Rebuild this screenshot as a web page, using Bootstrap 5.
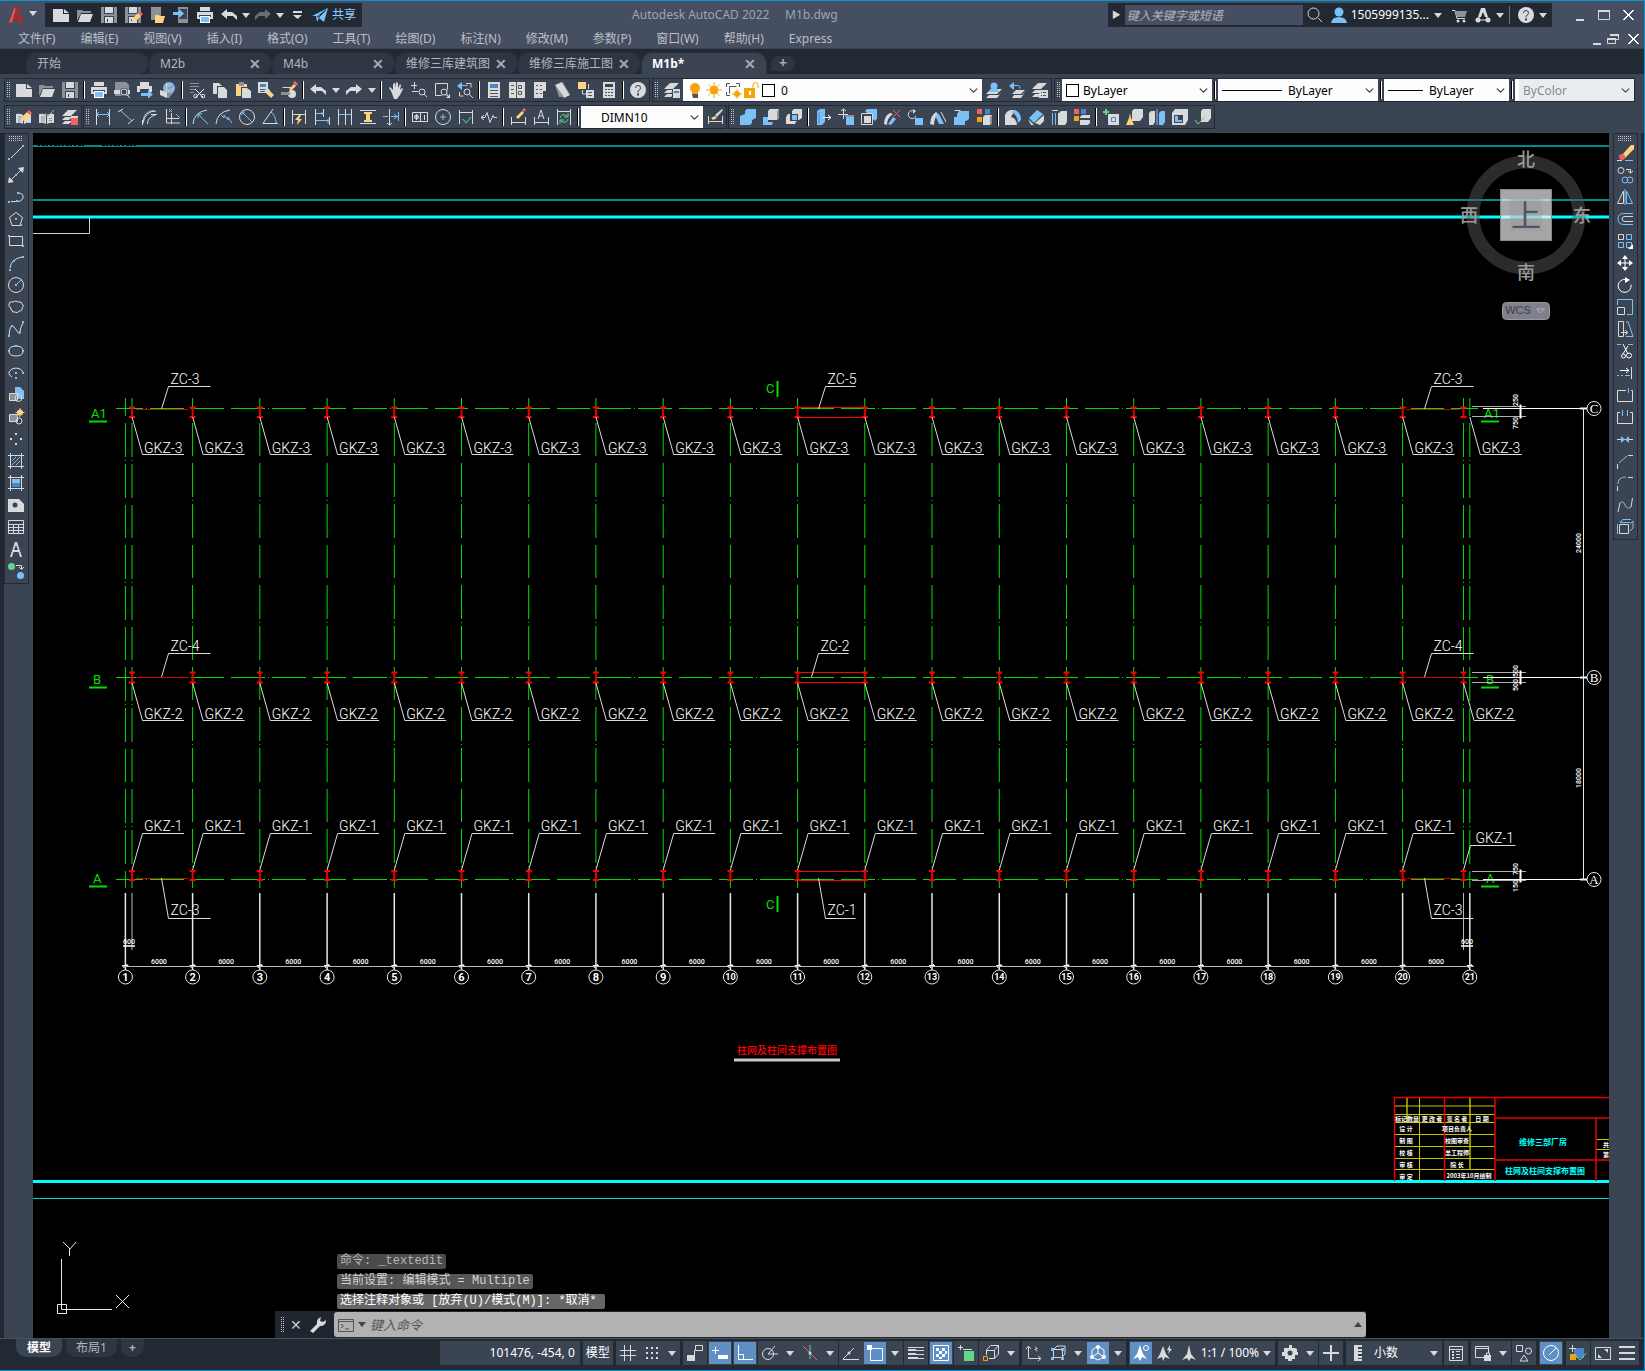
<!DOCTYPE html>
<html lang="zh-CN">
<head>
<meta charset="utf-8">
<meta name="viewport" content="width=device-width, initial-scale=1">
<title>Autodesk AutoCAD 2022 - M1b.dwg</title>
<link href="https://cdn.jsdelivr.net/npm/bootstrap@5.3.0/dist/css/bootstrap.min.css" rel="stylesheet">
<style>
:root{--bar:#464f61;--panel:#3b4453;--dark:#222933;--tab:#2e3643;--ink:#d9dadc;--on:#608fc3;--edge:#0a93d4}
body{font:12px/16px "Noto Sans","Noto Sans CJK SC",sans-serif;background:var(--dark);color:var(--ink)}
.app{height:100vh;border:solid var(--edge);border-width:1px 1px 1px 0;overflow:hidden}
button.tool{background:none;border:0;padding:0;color:inherit;display:flex;align-items:center;justify-content:center;flex:none}
svg.ico{width:16px;height:16px;overflow:visible;flex:none;display:block}
.caret-dn{width:0;height:0;border:4px solid transparent;border-top:5px solid var(--ink);border-bottom:0}
.titlebar{background:var(--bar);height:26px;padding-top:2px}
.qat{background:var(--dark);height:24px}
.qat .tool{width:24px;height:24px}.qat .drop{width:10px}
.share-btn{color:#8fcdfd!important;padding:0 6px 0 3px!important}
.caption-text{color:#a0a5ae}
.searchbox{width:178px;height:20px;background:var(--bar);border:0;color:#c5c8ce;font-size:12px;font-style:italic;padding:0 2px;outline:0}
.searchbox::placeholder{color:#b4b8c0;opacity:1}
.menubar{background:var(--bar);height:22px;padding:2px 0 0 6px;gap:1px;border-bottom:1px solid var(--panel)}
.menubar a{color:#bcbfc5;text-decoration:none;padding:0 12px}
.tabstrip{background:var(--dark);height:25px;padding:3px 0 0 26px}
.doc-tab{width:123px;height:22px;background:var(--tab);border-radius:11px 11px 11px 4px;padding:0 10px;color:#b4b7bc;border:1px solid #2a313d;border-bottom:0}
.doc-tab.current{background:var(--panel);color:#fff;font-weight:700;border-radius:11px 11px 0 0;width:126px}
.doc-tab .tool,.plus-tab{color:#a7abb1;font-size:14px;font-weight:700}
.plus-tab{width:24px;height:15px;background:var(--tab);border:0;border-radius:8px 8px 8px 3px;line-height:12px;padding:0}
.toolrows{background:var(--panel);height:59px;padding:4px 0 0 4px;gap:3px}
.frame{border:1px solid var(--dark);height:24px;display:flex;align-items:center}
.frame .tool{width:23px;height:22px}.frame .drop{width:13px}
.grip{width:7px;height:16px;flex:none;padding:0 1px;background:conic-gradient(#c3c7cd 25%,transparent 0) 0 0/2px 2px content-box}
.grip-h{width:14px;height:5px;margin:1px auto 1px 3px;background:conic-gradient(#c3c7cd 25%,transparent 0) 0 0/2px 2px}
.vsep{width:6px;height:18px;flex:none;display:flex;justify-content:center}
.vsep::before{content:"";width:2px;background:linear-gradient(90deg,#000 50%,#fff 50%)}
.combo{background:#fdfdfd;height:22px;display:flex;align-items:center;flex:none;color:#000}
.combo select{border:0;color:#000;font-size:12px;line-height:16px;padding:1px 20px 0 4px;height:22px;min-height:0;border-radius:0;background-color:transparent;background-size:9px 9px;background-position:right 4px center;width:auto;flex:1;min-width:0}
.w-layer{width:299px;gap:2px}.w-layer span.d-flex{gap:3px}.w-color{width:150px}.w-type{width:160px}.w-weight{width:125px}.w-plot{width:119px}.w-dim{width:122px}
.w-type select,.w-weight select{padding-left:6px}
.combo select:disabled{color:#7c7c7c;opacity:.9}
.swatch{width:13px;height:13px;border:1px solid #000;flex:none}
.side{background:var(--panel);width:29px;flex:none}
.side.right{width:32px;padding-left:4px}
.side .rack{width:25px;border:1px solid var(--dark);padding-top:1px;padding-bottom:1px}
.side .tool{width:22px;height:22px}
.board{background:#000;position:relative;flex:1;min-width:0;overflow:hidden}
.board svg.sheet{position:absolute;inset:0;width:100%;height:100%}
.cmd{position:absolute;bottom:0;left:242px;right:243px}
.hist{font:12px/15px "Liberation Mono","Noto Sans CJK SC",monospace;margin-left:62px;gap:5px}
.hist div{background:#4b4b4b;border-radius:2px;padding:0 3px;height:15px;color:#b6b6b6}
.hist div:nth-child(2){background:#565656;color:#d2d2d2}.hist div:nth-child(3){background:#666;color:#fff;padding-right:8px}
.cmdline{height:27px;background:#20262f;margin-top:2px}
.cmdline .close-x{color:#c8c8c8;font-size:14px}
.cmdline .entry{background:#b2b2b2;height:25px;border-radius:3px}
.cmdline .caret-dn{border-top-color:#444}.flip{transform:rotate(180deg)}
.cmdline input{background:none;border:0;outline:0;font-style:italic;font-size:13px;flex:1;padding:0}
.cmdline input::placeholder{color:#555;opacity:1}
.statusbar{background:var(--dark);height:32px;border-top:1px solid #4a505a;padding:0 5px 0 16px}
.layout-tab{height:18px;border:0;background:var(--tab);color:#b4b7bc;padding:0 10px;border-radius:0 0 10px 10px;line-height:18px;font-size:12px}
.layout-tab.current{background:var(--panel);color:#fff;font-weight:700;padding:0 11px}
.sgroup{background:var(--panel);height:24px;display:flex;align-items:center;margin-top:2px;color:#fff}
.sgroup .tool{width:24px;height:24px}.sgroup .drop{width:16px}
.sgroup .tool.active span{background:var(--on);width:22px;height:22px;display:flex;align-items:center;justify-content:center}
.coords{width:140px;justify-content:flex-end;padding-right:5px}
.label-cell{padding:0 3px;width:30px;margin-left:3px;justify-content:center}
.cad{font-family:Roboto,sans-serif;font-weight:300;font-size:14px;fill:#fff}
.cad-green{font-size:13px;font-weight:400;fill:#00e000}
.tiny{font:700 8px Roboto,sans-serif;fill:#fff}
.dimtxt{font:500 7px Roboto,sans-serif;fill:#fff}
.axis{font:13px "Liberation Serif",serif;fill:#fff}
.cjk{font-family:"Noto Sans CJK SC",sans-serif}
</style>
<script src="https://cdn.jsdelivr.net/npm/bootstrap@5.3.0/dist/js/bootstrap.bundle.min.js"></script>
</head>
<body>
<div class="app d-flex flex-column">
  <header>
    <div class="titlebar d-flex align-items-start">
      <button class="tool px-2 mt-1" aria-label="应用程序"><svg class="ico" viewBox="0 0 16 16"><path fill="#b3262b" d="M1 16L6.500 0h4L15 16h-4l-1-4H6l-1.500 4zM7 9h3L8.500 4z"/><path fill="#e8575a" d="M1 16L6.500 0l1 3L4 15z"/></svg></button>
      <span class="caret-dn mt-2 me-1 pt-1" style="margin-left:-3px"></span>
      <div class="qat d-flex align-items-center ps-1 ms-1" data-tools="new open save saveas mobopen mobsave print undo v redodim v bars"><button class="tool order-last w-auto gap-1 share-btn"><svg class="ico" viewBox="0 0 16 16"><path fill="#78c3fb" d="M0 9L16 1l-4 14-5-4-2 4-1-6z"/><path stroke="#222933" d="M5 10L14 3M6 11l7-7"/></svg>共享</button></div>
      <div class="flex-fill text-center caption-text align-self-center">Autodesk AutoCAD 2022 &nbsp;&nbsp;&nbsp; M1b.dwg</div>
      <div class="qat d-flex align-items-center">
        <span class="px-1" style="font-size:9px">▶</span>
        <input class="searchbox" type="text" placeholder="键入关键字或短语" aria-label="搜索">
        <span class="d-flex" data-tools="find user"></span><span class="text-white">1505999135...</span>
        <span class="d-flex ps-1" data-tools="v"></span><span class="d-flex ps-1" data-tools="cart aicon v"></span><span class="border-start border-secondary h-75 mx-1"></span><span class="d-flex pe-1" data-tools="helpc v"></span>
      </div>
      <div class="d-flex align-items-center ps-3 pe-1 qat bg-transparent" data-tools="wmin wmax wclose"></div>
    </div>
    <nav class="menubar d-flex align-items-center">
      <a href="#">文件(F)</a><a href="#">编辑(E)</a><a href="#">视图(V)</a><a href="#">插入(I)</a><a href="#">格式(O)</a><a href="#">工具(T)</a><a href="#">绘图(D)</a><a href="#">标注(N)</a><a href="#">修改(M)</a><a href="#">参数(P)</a><a href="#">窗口(W)</a><a href="#">帮助(H)</a><a href="#">Express</a>
      <div class="ms-auto d-flex gap-1" data-tools="cmin crest wclose" style="padding-right:3px"></div>
    </nav>
    <div class="tabstrip d-flex align-items-end">
      <div class="doc-tab d-flex align-items-center">开始</div>
      <div class="doc-tab d-flex align-items-center justify-content-between">M2b<button class="tool" aria-label="关闭">✕</button></div>
      <div class="doc-tab d-flex align-items-center justify-content-between">M4b<button class="tool" aria-label="关闭">✕</button></div>
      <div class="doc-tab d-flex align-items-center justify-content-between text-nowrap">维修三库建筑图<button class="tool" aria-label="关闭">✕</button></div>
      <div class="doc-tab d-flex align-items-center justify-content-between text-nowrap">维修三库施工图<button class="tool" aria-label="关闭">✕</button></div>
      <div class="doc-tab current d-flex align-items-center justify-content-between">M1b*<button class="tool" aria-label="关闭">✕</button></div>
      <button class="plus-tab align-self-center ms-1" aria-label="新图形">+</button>
    </div>
    <div class="toolrows d-flex flex-column">
      <div class="d-flex text-nowrap" style="gap:2px">
        <div class="frame" data-tools="grip new open save | print preview plot globe | cut copy paste match block | undo v redo v | pan zoomrt zoomwin zoomprev | props dcenter palette sheet markup calc | helpc"></div>
        <div class="frame"><div class="d-flex align-items-center" data-tools="grip layers"></div>
          <div class="combo w-layer ps-1"><span class="d-flex" data-icons="bulb sun vpfreeze lock"></span><span class="swatch"></span><select class="form-select" aria-label="图层"><option>0</option></select></div>
          <div class="d-flex" data-tools="laycur layprev laystate"></div></div>
        <div class="frame"><div class="grip"></div>
          <div class="combo w-color ps-1"><span class="swatch"></span><select class="form-select" aria-label="颜色"><option>ByLayer</option></select></div><div class="vsep"></div>
          <div class="combo w-type ps-1"><svg width="60" height="1"><path stroke="#000" d="M0 .5h60"/></svg><select class="form-select" aria-label="线型"><option>ByLayer</option></select></div><div class="vsep"></div>
          <div class="combo w-weight ps-1"><svg width="35" height="1"><path stroke="#000" d="M0 .5h35"/></svg><select class="form-select" aria-label="线宽"><option>ByLayer</option></select></div><div class="vsep"></div>
          <div class="combo w-plot ps-1"><select class="form-select" disabled aria-label="打印样式"><option>ByColor</option></select></div></div>
      </div>
      <div class="d-flex" style="gap:1px">
        <div class="frame" data-tools="grip annoedit annook layerase"></div>
        <div class="frame"><div class="d-flex align-items-center" data-tools="grip dimlin dimalign dimarc dimord | dimrad dimjog dimdia dimang | dimquick dimbase dimcont dimspace dimbreak | tol center inspect jogline | dimedit dimtext dimupd |"></div>
          <div class="combo w-dim ps-3"><select class="form-select" aria-label="标注样式"><option>DIMN10</option></select></div>
          <div data-tools="dimstyle"></div></div>
        <div class="frame" data-tools="grip union subtract intersect | extrude movef offsetf delf rotf taper copyf colorf | filletf chamf copye colore | imprint clean separate shell check"></div>
      </div>
    </div>
  </header>
  <main class="d-flex flex-fill" style="min-height:0">
    <div style="width:4px" class="flex-shrink-0"></div>
    <aside class="side"><div class="rack d-flex flex-column" data-tools="griph line xline pline poly rect arc circ cloud spline ell ellarc insert mkblock point hatch grad region table text addsel"></div></aside>
    <section class="board">
      <svg class="sheet" id="sheet" aria-label="柱网及柱间支撑布置图"></svg>
      <div class="cmd">
        <div class="hist d-flex flex-column align-items-start"><div>命令: _textedit</div><div>当前设置: 编辑模式 = Multiple</div><div>选择注释对象或 [放弃(U)/模式(M)]: *取消*</div></div>
        <div class="cmdline d-flex align-items-center">
          <div class="grip ms-1"></div><button class="tool px-1 close-x" aria-label="关闭">✕</button><div class="px-1 me-1" data-icons="wrench"></div>
          <div class="entry d-flex align-items-center flex-fill px-1"><span data-icons="prompt"></span><span class="caret-dn mx-1"></span><input type="text" placeholder="键入命令" aria-label="命令"><span class="caret-dn flip"></span></div>
        </div>
      </div>
    </section>
    <aside class="side right"><div class="rack d-flex flex-column" data-tools="griph erase copyo mirror offset array move rotate scale stretch trim extend brkpt brk join chamfer fillet blend explode"></div></aside>
    <div style="width:3px" class="flex-shrink-0"></div>
  </main>
  <footer class="statusbar d-flex align-items-start text-nowrap">
    <button class="layout-tab current">模型</button><button class="layout-tab ms-1">布局1</button><button class="layout-tab ms-1 fw-bold px-2">+</button>
    <div class="ms-auto d-flex" id="status">
      <div class="sgroup coords">101476, -454, 0</div><div class="sgroup label-cell">模型</div>
    </div>
  </footer>
</div>
<script>
/* Icon glyphs on a 16px grid. Each part is "<colour> <path>"; lower case strokes, upper case fills, "o x,y,r" is a circle. */
const C={w:'#d9dadc',b:'#7cc0f8',y:'#ffd27f',g:'#63d68a',r:'#f4625f',k:'#3b4453',d:'#8d929a',o:'#f5a30a',x:'#555',n:'#fff',t:'#4a86c5',q:'#6a6f78'};
const PEN='Y M7 12l6-6 3 3-6 6z|R M13 6l2-2 3 3-2 2z|W M7 12l3 3-4 1z';
const SAVE='D M0 0h16v16H0z|K M3 0h10v7H3z|W M4 0h8v6H4z|K M3 9h10v7H3z|W M4 10h8v6H4z|K M6 12h1v3H6z';
const LAY='W M0 7l6-6h9l-6 6z|W M0 11l3-3h7l-3 3z|W M0 15l3-3h7l-3 3z';
const DIM='w M1.500 1v14M14.500 1v14M2 5.500h12';
const I={
new:'W M0 2h10v5h6v8H0z|W M11 2l5 4h-5z',open:'D M0 14V3h5l1 1h8v2H4z|W M4 7h12l-3 8H1z',save:SAVE,saveas:SAVE+'|'+PEN,
mobopen:'D M2 0h10v13H2z|Y M6 16V8h4l1 1h5l-2 7z',mobsave:'D M5 0h10v16H5z|K M6 2h8v10H6z|B M0 5h6V2l5 4.500L6 11V8H0z',
print:'W M3 0h10v4H3z|W M0 5h16v7H0z|K M2 8h12v2H2z|N M3 9h10v7H3z|B M4 10h8v5H4z',
undo:'W M0 7l6-5v3h5l5 4v4l-4-4H6v3z',redo:'W M16 7l-6-5v3H5L0 9v4l4-4h6v3z',redodim:'Q M16 7l-6-5v3H5L0 9v4l4-4h6v3z',bars:'W M4 4h9v2H4z|W M4 8h9l-4.500 4z',
find:'w o6.5,6.5,5.5|y M11 11l4 4',user:'B o8,5,4.500|B M0 16q1-6 8-6t8 6z',cart:'w M1 3.500h3l2 8h8|D M4 4h12l-2 6H6z|W o7,14,1.500|W o13,14,1.500',
aicon:'w M8 2L3 13M8 2l5 11M3 13h10|W o3,13,2.500|W o13,13,2.500|W M6 1h4l3 9h-3L8 5l-2 5H3z',helpc:'W o8,8,8|k M5.500 6q0-2.500 2.500-2.500t2.500 2.200T8 9v1.500|K M7 11.500h2v2H7z',
wmin:'W M4 12h8v2H4z',wmax:'w M2.500 3.500h11v9h-11z|W M2 3h12v2H2z',wclose:'n M3 3l10 10M13 3L3 13|n M4 3l10 10M14 3L4 13',cmin:'W M8 12h8v2H8z',crest:'w M5.500 3.500h8v5h-8M2.500 7.500h8v5h-8z|W M5 3h9v2H5zM2 7h9v2H2z',
preview:'D M1 0h11l3 3v11H1z|W M0 8h16v4H0z|K o10,10,4|w o10,10,3|w M12 12l4 4',plot:'W M3 0h9v4H3z|W M0 4h15v6H0z|K M3 7h9v4H3z|B M4 11h7v-3l5 4.500-5 4V14H4z',
globe:'B o9,6,6|r M4 4q5 5 10-1|y M7 1q-2 6 3 10|W M0 8l7 2v6l-7-3z|D M7 10l6 1-4 5H7z',cut:'d M1 1.500h9M1 4.500h9M1 7.500h5M1 10.500h4|n M6 7l9 9M15 7l-9 9|w o6.5,14,1.800|w o14,14,1.800',
copy:'W M1 1h6l3 3v8H1z|K M5 4h10v12H5z|W M6 5h6l3 3v8H6z',paste:'Y M1 2h11v12H1z|D M4 0h5v4H4z|K M6 5h10v11H6z|W M7 6h5l4 3v7H7z',
match:'W M0 0h10v11H0z|T M2 2h6v3H2z|x M2 7.500h6M2 9.500h6|Y M8 11l3-3 5 5-3 3z|W M6 9l3-3 3 2-3 3z',block:'w M1.500 5.500h8v6|W o11,12,4|D M0 10h9v3H0z|Y M8 7l5-5 2 2-5 5z|R M12 1l2-2 3 3-2 2z',
pan:'W M3 9L1 6l1-1 3 3V2l2-1v5l1-6 2 1v5l2-4 1 1-1 5 2-2 1 1-3 6-3 4H6z',zoomrt:'w M0 3.500h6M3.500 0v7M1 9.500h6|w o11,10,3|y M13 12l3 3',zoomwin:'w M1.500 1.500h12v12h-12z|K o10,10,4|w o10,10,3|W M16 12v4h-4z',zoomprev:'B M5 0v8L0 4z|b M4 3.500h7|w M9 1.500h5v4M2.500 10v4h4|w o10,10,3|w M12 12l4 4',
props:'W M2 0h12v16H2z|T M4 2h8v4H4z|x M4 8.500h8M4 11.500h8M4 14.500h8',dcenter:'W M0 0h16v16H0z|x M7.500 0v16M2 3.500h3M2 7.500h3M2 11.500h3M9.500 3.500h3v3h-3zM9.500 9.500h3v3h-3z',palette:'W M2 0h12v16H2z|x M4 3.500h2M8 3.500h2M4 7.500h2M8 7.500h2M4 11.500h2M8 11.500h2|K M11 9h5v7h-5z',
sheet:'W M0 3l7-3 8 13-6 3z|d M7 0q5 8 8 13|D M0 3l4 12h5z',markup:'Y M0 0h8v7H0z|w M4.500 8v4h4M10.500 2v5|W M8 8h8v8H8z|x M10 10.500h4M10 13.500h4',calc:'W M2 0h12v16H2z|K M4 2h8v3H4z|x M4 7.500h2M7 7.500h2M10 7.500h2M4 10.500h2M7 10.500h2M10 10.500h2M4 13.500h2M7 13.500h2M10 13.500h2',
layers:LAY+'|K M8 7h8v9H8z|W M9 7h7v9H9z|T M10 9h5v2h-5z',bulb:'O o8,6,5|O M5 9h6v3H5z|X M5 12h6v4H6z',sun:'O o8,8,4.500|o M8 0v3M8 13v3M0 8h3M13 8h3M2.500 2.500l2 2M11.500 11.500l2 2M13.500 2.500l-2 2M4.500 11.500l-2 2',vpfreeze:'x M1.500 5V1.500H5M11 1.500h3.500V5M1.500 10v3.500H5|x M4.500 4.500h7M4.500 4.500v7|O o12,12,3|o M12 7v10M7 12h10',lock:'O M0 6h11v10H0z|o M9 6V3q0-2.500 2.500-2.500T14 3v3|N M5 9h2v4H5z',
laycur:'W M0 12l5-5h11l-5 5z|W M0 16l3-3h10l3-3-5 6z|B o8,4,3.500|B M3 10q1-4 5-4t5 4z',layprev:'B M5 0v8L0 4z|b M4 3.500h5q2 0 2 3|W M3 12l4-4h9l-4 4z|W M3 16l2-3h8l3-3-4 6z',laystate:LAY+'|W M7 8h9v8H7z|x M9 10.500h1M11 10.500h3M9 13.500h1M11 13.500h3',
annoedit:'W M0 5q4-1 7 1v9q-3-2-7-1zM15 5q-4-1-7 1v9q3-2 7-1z|d M2 8h4M2 10h4M2 12h4|Y M5 9l6-6 3 3-6 6z|R M11 3l2-2 3 3-2 2z|W M5 9l3 3-4 1z',annook:'W M0 5q4-1 7 1v9q-3-2-7-1zM15 5q-4-1-7 1v9q3-2 7-1z|d M2 8h4M2 10h4M2 12h4M10 9.500h3M10 11.500h3|g M6 4l3 3 6-6',layerase:LAY+'|R M9 8h7v8H9z|W M9 7h7v2H9z',
dimlin:'w M1.500 0v16M14.500 0v16|b M2 5.500h12M4 3L1.500 5.500 4 8M12 3l2.500 2.500L12 8',dimalign:'w M0 3l5-3M10 15l6-5|b M3 2l11 10',dimarc:'w M1.500 11v5M10 5.500h6M6.500 15q0-7 8-9|b M2 14Q2 2 13 1.500|w M2 14Q4 2 15 2',dimord:'w M2.500 0v14H16M7.500 4v11M3 9.500h12|b M8 0l-3 3M5 0l3 3M12 5l4 4',
dimrad:'w M0 15Q1 3 14 1|b M5 5l10 10M5 9V5h4',dimjog:'w M0 15Q1 3 14 1|b M4 5l4 4v-3l4 5v-3l4 6',dimdia:'w o8,8,7.500|b M3 3l10 10M3 6V3h3',dimang:'w M1 14.500h15M1 14.500L11 0|b M9 3q5 4 5 11',
dimquick:DIM+'|Y M8 6l-4 5h3l-1 5 5-6H8l2-4z',dimbase:'w M1.500 0v16M9.500 0v8M15.500 8v8|b M2 4.500h8M2 11.500h14M8 3v3M14 10v4',dimcont:'w M1.500 0v16M8.500 0v16M14.500 0v16|b M2 5.500h12',dimspace:'w M0 1.500h16M0 14.500h16|Y M4 3h8v2h-2v6h2v2H4v-2h2V5H4z',dimbreak:'w M6.500 0v16M4 14l2.500 2L9 14|b M0 7.500h5M8 7.500h7M15.500 3v9M11 5l3 2.500-3 2.500',
tol:'w M.5 3.500h15v9H.5zM8.500 3v9|w o4.5,8,2|w M2 8h5M4.500 5v6M12.500 6v5',center:'w o8,8,7.500|b M8 5v6M5 8h6',inspect:'w M1.500 1v14M14.500 1v14M2 3.500h12|g M5 10l3 4 5-6',jogline:'w M0 8.500h4l2-5 3 10 3-7 1 2h3M3 6L0 8.500 3 11',
dimedit:'w M1.500 8v8M15.500 8v8M2 13.500h13|Y M6 8l6-6 2 2-6 6z|R M12 1l2-2 2 2-2 2z',dimtext:'w M1.500 8v8M15.500 8v8M2 13.500h13M5 10l3-9 3 9M6 7h4',dimupd:'w M1.500 0v16M14.500 0v16M2 2.500h12|g M4 9q1-4 5-3l2 1M12 10q-1 4-5 3l-2-1M12 4v4H8M4 15v-4h4',dimstyle:'w M1.500 7v8M15.500 7v8M2 12.500h13|Y M4 9l4-2 2 2-4 2z|W M8 6l7-6 1 1-6 7z',
union:'B M0 7l5-2V2l2-2h9v9l-4 2v3l-2 2H0z',subtract:'B M0 8h5v5h5l-1 3H0z|W M5 2l2-2h9v9l-2 2H5z|D M14 2l2-2v9l-2 2z',intersect:'W M0 8l2-3h4V2l2-2h8v9l-3 2h-2l-2 4H0z|K M4 5h8v7H4z|B M6 6h5v5H6z',
extrude:'B M2 2l3-2h5v13l-3 3H2z|t M4 3v12|n M8 8.500h8M13 6l3 2.500-3 2.500',movef:'w M5.500 0v10M0 5.500h10M3 2l2.500-2L8 2|B M8 8h8v8H8z|w M16 7H7',offsetf:'B M4 2l2-2h10v10l-2 2z|K M0 4h12v12H0z|w M.5 4.500h11v11H.5z|W M3 7h7v7H3z',delf:'W M0 15q0-8 6-11l3 1q-6 4-6 11z|B M4 15l5-7 3 2-5 6z|r M9 1l7 7M16 1L9 8',rotf:'w M7 2a4 4 0 1 0 2 5|W M6 0l3 2-3 3z|B M8 9h8v7H8z',taper:'W M0 15Q1 6 6 3l2 2q-4 4-4 11z|B M5 6l4-1 5 10h-5z|w M11 3l5 10',
copyf:'B M4 5l2-3h10v8l-3 2H4z|B M1 8h11v8H1z|w M1.500 1.500h6',colorf:'R M1 0h5v5H1z|T M9 0h5v5H9z|O M1 8h5v5H1z|W M7 8l2-2h7v8l-2 2H7z|D M14 8l2-2v8l-2 2z',filletf:'W M0 6Q2 1 7 1h3l-4 7v8H0z|B M6 3l4-2q6 2 6 10l-3 3Q13 6 6 3z|W M5 8q6 0 7 8H5z',chamf:'B M1 9l8-8 6 4-9 9z|W M7 14l9-8v6l-4 4z|W M0 10l6 6H3z',copye:'b M1.500 4v12M4.500 4v12|w M1 1.500h6|W M8 4l2-2h6v11l-2 3H7V4z',colore:'R M0 0h5v5H0z|T M7 0h5v5H7z|O M0 7h5v5H0z|W M6 8l2-2h8v3H6zM6 11h10v3l-2 2H6z',
imprint:'G M2 0h2v2h2v2H4v2H2V4H0V2h2z|W M5 5h11v11H5z|t M8.500 8.500h4v4h-4z',clean:'W M6 2l2-2h9v8l-3 4H6z|Y M3 9l1-5 1 5 3 7H0z',separate:'W M0 4l2-2h4v11l-2 3H0z|B M10 4l2-2h4v11l-2 3h-4z|b M8 0v16',shell:'W M0 4l3-4h13v11l-3 5H0z|K M2 6h9v8H2z|B M3 7h3v4h4v2H3z',check:'W M6 2l2-2h8v9l-3 4H6z|g M0 11l3 4 7-7',
line:'w M3 13L14 2|B M0 13h2v2H0zM14 0h2v2h-2z',xline:'w M2 14L14 2|W M0 16l1-6 5 5zM16 0l-1 6-5-5z|B M7 7h2v2H7z',pline:'w M3 12.500h6M10 4q6 0 5 5-2 4-5 3.500|B M0 12h2v2H0zM9 3h2v2H9zM8 11h2v2H8z',poly:'w M8 1.500l6.500 5-2.500 8H4l-2.500-8z|B M7 7h2v2H7zM12 13h2v2h-2z',rect:'w M1.500 3.500h13v9h-13z|B M0 2h2v2H0zM14 12h2v2h-2z',arc:'w M2 13Q3 4 14 2|B M1 14h2v2H1zM5 5h2v2H5zM14 1h2v2h-2z',circ:'w o8,8,7.500|b M9 7l4-4|B M7 7h2v2H7zM12 2h2v2h-2z',cloud:'w M3 9q-3-1-2-4 0-3 4-2 3-2 5 0 4-1 4 2 3 2 0 4 1 3-3 3-1 3-4 1-3 1-3-2-2 0-1-2',spline:'w M1 14Q2 5 4 5t5 5 3 1 3-9|B M0 14h2v2H0zM3 4h2v2H3zM11 10h2v2h-2zM14 0h2v2h-2z',
ell:'w M1 8q0-5 7-5t7 5-7 5-7-5|B M0 7h2v2H0zM7 2h2v2H7zM14 7h2v2h-2z',ellarc:'w M4 12Q0 10 1 7q2-4 7-4t7 4|B M7 7h2v2H7zM14 7h2v2h-2zM7 12h2v2H7z',insert:'B M7 0h5l4 4v8H7z|w M1.500 6.500h8v7h-8z|D M2 7h7v6H2z|w o10.5,11,3.500',mkblock:'D M1 5h9v8H1z|w M1.500 5.500h8v7h-8z|w o11,12,3|Y o12,3.500,3|y M12-1v9M7.500 3.500h9',point:'W M7 2h2v2H7zM7 12h2v2H7zM2 7h2v2H2zM12 7h2v2h-2z',hatch:'w M2.500 0v16M13.500 0v16M0 2.500h16M0 13.500h16|b M4 8l4-4M4 12l8-8M8 12l4-4',grad:'w M2.500 0v16M13.500 0v16M0 2.500h16M0 13.500h16|B M4 4h8v4H4z|T M4 8h8v4H4z',region:'W M0 2h11l5 5v8H0z|K o7,8,2.500',table:'w M.5 1.500h15v13H.5zM0 5.500h16M0 8.500h16M0 11.500h16M5.500 5v9M10.500 5v9',text:'W M2 16L7 1h2l5 15h-2l-1.500-5h-5L4 16zM6 9h4L8 4z',addsel:'G o3.500,3.500,3.500|B o12.5,12.5,3.500|w M8 2.500h5.500V6M11 4l2.500 2.500L16 4',
erase:'Y M5 10L14 0h3v4l-9 9z|R o5,12,3|w M0 15.500h5|b M8 15.500h8',copyo:'w o4,3.500,3|w M9 2.500h4.500V6M11 4l2.500 2L16 4|b o8,13,3|b o13,13,3',mirror:'w M6.500 2v12.500H.5z|b M9.500 2v12.500h6zM8 0v16',offset:'b M16 2.500H7q-6 0-6 5.500t6 5.500h9|w M16 5.500H8q-3 0-3 2.500t3 2.500h8',array:'w M1.500 1.500h5v5h-5z|b M9.500 1.500h5v5h-5zM1.500 9.500h5v5h-5zM9.500 9.500h5v5h-5z|N M16 11v5h-5z',move:'n M8 1v14M1 8h14|N M8 0l3 4H5zM8 16l3-4H5zM0 8l4-3v6zM16 8l-4-3v6z',rotate:'n M9 2.500a6.500 6.500 0 1 0 5 5|N M8 0l5 3-5 3z',scale:'b M.5 6V.5h15v15H10|w M.5 8.500h7v7h-7z',stretch:'w M1.500.5h5v15h-5zM4 11.500h6M8 9l3 2.500L8 14|b M9 1.500l2-1 5 15h-7',trim:'b M0 1.500h4M11 1.500h5|n M6 1l5 10M11 3l-5 8|n o6.5,13,2|n o12,12.500,2.500',extend:'w M14.500 2v12|n M3 5.500h9M9 3l3 2.500L9 8|b M0 10.500h2M4 10.500h2M8 10.500h5',brkpt:'w M9 3.500H.5v11h15v-11H14|b M11.500 1v5',brk:'w M3 3.500H.5v11h15v-11H13|b M5.500 1v6M10.500 1v6',join:'w M0 8.500h16|B M4 5l4 3.500L4 12zM12 5L8 8.500l4 3.500z',chamfer:'b M2 10l8-7|w M11 2.500h5M.5 11v5',fillet:'b M1 9q0-7 8-7|w M11 2.500h5M.5 11v5',blend:'b M3 6q3-3 5 2t6 2|w M3 6l-2 9M14 10l1.500-9',explode:'w M2.500 5.500h9v9h-9z|b M.5 5v10M3 3l3-2.500h8M3 3.500h10M13 12l3-3V2l-3 3',
wrench:'W M0 14l7-7q-1-5 4-7l-1 4 3 1 3-2q0 6-6 6l-7 7z',prompt:'x M.5 2.500h15v12H.5zM.5 4.500h15M3 7l2.500 2L3 11M7 12h4',
grid:'w M4.500 0v16M10.500 0v16M0 5.500h16M0 10.500h16',snap:'W M2 2h2v2H2zM7 2h2v2H7zM12 2h2v2h-2zM2 7h2v2H2zM7 7h2v2H7zM12 7h2v2h-2zM2 12h2v2H2zM7 12h2v2H7zM12 12h2v2h-2z',infer:'W M0 10h8v6H0z|w M8.500.5h7v5h-7zM7.500 5v8',dyn:'n M0 5.500h7M3.500 2v7|N M6 10h10v4H6z',ortho:'n M1.500 0v14.500H16M1.500 9.500h5v5',polar:'w o6,9,5.500|w M6 9l7-8M6 9h10',iso:'r M1 1l14 14|g M8 0v14|W o8,8,1.500',track:'w M0 14.500h16M0 14l11-11|W o6,8,1.500',osnap:'n M3.500 3.500h12v12h-12z|N M0 0h5v5H0z',lwt:'w M0 2.500h16|W M0 4h8v2H0zM0 8h8v2H0zM0 12h10v2H0z|w M8 5.500h8M8 9.500h8M10 13.500h6',transp:'n M.5.5h15v15H.5z|N M3 3h3v3H3zM9 3h3v3H9zM6 6h3v3H6zM3 9h3v3H3zM9 9h3v3H9zM12 6h2v3h-2zM6 12h3v2H6z',cycle:'w M2.500 0v5M0 2.500h5M5 4.500h9|G M6 6h10v10H6z',osnap3:'w M3.500 10V5l4-4.500h8V9l-4 4.500H6M3.500 5.500h8v8M11.500 5l4-4.500|o M.5 11.500h4v4h-4z',ducs:'w M2.500 2v11.500H14M0 4l2.500-3L5 4M12 11l3 2.500-3 2.500|W M9 1l3 3h-2l2 3-4-3h2z',filt:'w M3.500 4.500h9v8h-9zM4 4l3-3h8v8l-3 3|B M1 3h3v3H1zM11 3h3v3h-3zM1 12h3v3H1zM11 12h3v3h-3z',gizmo:'n M8 1l6 4v7l-6 3-6-3V5zM8 1v7l6 4M8 8l-6 4|N o8,2,2|N o2,12,2|N o14,12,2',
anv:'N M7 0l3 9 4 5-5-2-2 4-2-4-5 2 4-5z|n o13,3,2.500',ana:'W M6 1l3 8 4 5-5-2-2 4-1-4-5 2 3-5z|W M13 0l-3 5h2l-1 4 4-5h-2z',ann:'W M8 0l2 9 5 6-5-2-2 3-2-3-5 2 5-6z',gear:'W M7 0h3v3h3l2 1v3h1v3h-3v4h-3v2H6v-2H3v-3H0V7h2V3h5z|K o8,8,2.500',plus:'W M7 0h2v16H7zM0 7h16v2H0z',ruler:'W M4 0h8v2H8v2h4v2H8v1h4v2H8v2h4v2H8v1h4v2H4z',list:'w M1.500 1.500h13v14h-13zM1 4.500h13|W M4 6h2v2H4zM8 6h4v1H8zM4 9h2v2H4zM8 9h4v1H8zM4 12h2v2H4zM8 12h4v1H8z',uilock:'w M9 12.500H.5v-11h13V8M0 3.500h14|W M9 10h7v6H9z|w M14.500 10V8h-3v2',isol:'w M.5.5h6v6h-6zM8 10l4 6H4z|w o12.5,6,3',perf:'n o8,8,7.500|n M6 10l7-7',cad:'T M4 3h10v10H4z|W M2 0h1v3h3v1H3v3H2V4H-1V3h3z|O M0 9h6v6H0z|g M6 11l4 4 6-7',full:'w M.5 2.500h15v12H.5z|W M9 4h4v4zM3 9v4h4z',burger:'W M0 1h16v2H0zM0 7h16v2H0zM0 13h16v2H0z'};
function svg(n){return '<svg class="ico" viewBox="0 0 16 16">'+I[n].split('|').map(s=>{const k=s[0],l=k.toLowerCase(),a=k===l?`fill="none" stroke="${C[l]}"`:`fill="${C[l]}"`,d=s.slice(2);
 if(d[0]==='o'){const[x,y,r]=d.slice(1).split(',');return `<circle cx="${x}" cy="${y}" r="${r}" ${a}/>`}
 return `<path d="${d}" ${a}/>`}).join('')+'</svg>'}
function tool(n){
 if(n==='grip')return '<div class="grip"></div>';if(n==='griph')return '<div class="grip-h"></div>';
 if(n==='|')return '<div class="vsep"></div>';
 if(n==='v')return '<button class="tool drop" aria-label="展开"><span class="caret-dn"></span></button>';
 if(n==='sp')return '<span class="ps-1"></span>';if(n==='pad')return '<span class="ps-4 me-1"></span>';
 if(n[0]==='*')return `<button class="tool active" aria-label="${n.slice(1)}"><span>${svg(n.slice(1))}</span></button>`;
 if(n[0]==='#')return `<span>${n.slice(1).replace(/_/g,' ')}</span>`;
 return `<button class="tool" aria-label="${n}">${svg(n)}</button>`}
document.querySelectorAll('[data-tools]').forEach(e=>e.insertAdjacentHTML('beforeend',e.dataset.tools.split(' ').map(tool).join('')));
document.querySelectorAll('[data-icons]').forEach(e=>e.innerHTML=e.dataset.icons.split(' ').map(svg).join(''));
const groups=['3 grid snap v','3 infer','1 *dyn','1 *ortho','1 polar v iso v','1 track *osnap v','1 lwt','1 *transp','1 cycle','1 osnap3 v','3 ducs filt v *gizmo v','3 *anv ana ann #1:1_/_100% v','3 gear v','1 plus','3 ruler sp #小数 pad v','2 list','3 uilock v','1 isol','3 *perf','3 cad','1 full burger'];
document.getElementById('status').insertAdjacentHTML('beforeend',groups.map(g=>{const[m,...t]=g.split(' ');return `<div class="sgroup" style="margin-left:${m}px">${t.map(tool).join('')}</div>`}).join(''));

/* The drawing: column grid 1-21, rows C / B / A, braces, dimensions and title block. */
let s='';
const L=(x1,y1,x2,y2,c,w=1,x='')=>s+=`<path d="M${x1} ${y1}L${x2} ${y2}" stroke="${c}" stroke-width="${w}" fill="none" ${x}/>`;
const P=(d,c='#dcdcdc',w=1)=>s+=`<path d="${d}" stroke="${c}" stroke-width="${w}" fill="none"/>`;
const T=(x,y,t,cls='cad',x2='')=>s+=`<text x="${x}" y="${y}" class="${cls}" ${x2}>${t}</text>`;
const mid='text-anchor="middle"';
const X=i=>+(125.4+67.22*(i-1)).toFixed(1),G='#00e000',W='#e8e8e8',R='#f00',x1b=132,x20b=1463.500;
const right=4000;
L(33,146,right,146,'#008c8c',2);L(33,200,right,200,'#008c8c',2);L(33,217,right,217,'#0ff',3);
for(let x=38;x<138;x+=4)if(x<86||x>100)L(x,145,x+2+(x%3?0:1),145,'#000',2);
P('M33 233.500H89.500V217','#d0d0d0');
L(33,1181.500,right,1181.500,'#0ff',3);L(33,1198.500,right,1198.500,'#00d8d8',1);
const dash='stroke-dasharray="1 3 34 7 33 7 34 3"';
const all=[...Array(21)].map((_,i)=>X(i+1));
all.forEach((x,i)=>{const e=i===0||i===20;L(x,398,x,888,G,1,dash+` stroke-dashoffset="${e?60:20}"`)});
[x1b,x20b].forEach(x=>L(x,398,x,888,G,1,dash+' stroke-dashoffset="60"'));
[408.500,677.500,879.500].forEach(y=>L(116,y,1478,y,G,1,dash+' stroke-dashoffset="92"'));
const posts=[x1b,...all.slice(1,20),x20b];
[[407.500,417],[672.500,682.500],[871,880]].forEach(([a,b],r)=>{
 posts.forEach(x=>{L(x,a,x,b,'#e00000',2);L(x-3,a,x+3,a,R,2);L(x-3,b,x+3,b,R,2)});
 const ym=[409.500,677.500,878.500][r];L(x1b+4,ym,X(2)-4,ym,'#d00000');L(X(20)+4,ym,x20b-4,ym,'#d00000');
 P(`M${X(11)} ${Math.floor(a)+.5}H${X(12)}M${X(11)} ${Math.floor(b)+.5}H${X(12)}`,R)});
posts.forEach((x,i)=>{const last=i===20,xc=last?X(21):x;
 P(`M${xc} 417L${xc+10.5} 454.500H${xc+52}`);T(xc+12,453,'GKZ-3');
 P(`M${x} 683L${x+10.5} 720.500H${x+52}`);T(x+12,719,'GKZ-2');
 const y=last?845.500:833.500;P(`M${x} 870L${x+(last?7:10.5)} ${y}H${x+52}`);T(x+12,y-2.500,'GKZ-1')});
[[161.500,'3','4','3'],[818.500,'5','2','1'],[1424.500,'3','4','3']].forEach(([x,c,b,a])=>{const e=c==='5'?37:49;
 P(`M${x} 409L${x+7} 386.500H${x+e}`);T(x+9,384,'ZC-'+c);
 const xb=c==='5'?x-7:x;P(`M${xb} 677L${xb+7} 653.500H${xb+e}`);T(xb+9,651,'ZC-'+b);
 P(`M${x} 878L${x+7} 918.500H${x+e}`);T(x+9,915,'ZC-'+a)});
[[91,89],[1484,1481]].forEach(([x,u])=>{T(x,418,'A1','cad cad-green');T(x+2,684,'B','cad cad-green');T(x+2,883,'A','cad cad-green');[421.500,687.500,886.500].forEach(y=>L(u,y,u+18,y,G,2))});
T(766,393,'C','cad cad-green');L(777.500,381,777.500,397,G,2);T(766,909,'C','cad cad-green');L(777.500,896,777.500,912,G,2);
/* bottom dimensions */
all.forEach((x,i)=>{L(x,893,x,970,W,1.500);L(x-3,966,x+3,966,'#fff',2);P(`M${x-2} 968l4-4`,'#fff');
 s+=`<circle cx="${x}" cy="977" r="7" fill="none" stroke="${W}"/>`;T(x,i<9?981:980,i+1,'tiny',mid+' style="font-size:'+(i<9?11:9)+'px"');
 if(i<20)T(x+33.500,964,'6000','dimtxt',mid)});
L(122,966.500,1474,966.500,'#b8b8b8');
[x1b,x20b].forEach(x=>L(x,893,x,950,'#b8b8b8'));
[129,1467].forEach(x=>{L(x-6,946,x+6,946,'#fff',1.500);T(x,944,'600','dimtxt',mid)});
/* right dimensions */
[[408.500,'C',406.500,416.500,'250','750',400,423],[677.500,'B',672.500,682.500,'500','500',671,685],[879.500,'A',871.500,880.500,'750','150',869,886]].forEach(([y,n,a,b,t1,t2,c1,c2])=>{
 L(1483,y,1587,y,'#fff');L(1472,a,1526,a,'#b0b0b0');L(1472,b,1526,b,'#b0b0b0');L(1520.500,a-2,1520.500,b+2,'#fff',2);
 s+=`<circle cx="1594" cy="${y}" r="7" fill="none" stroke="${W}"/>`;T(1594,y+4,n,'axis',mid);L(1580,y,1587,y,'#fff',2);
 T(1518,c1,t1,'dimtxt',`${mid} transform="rotate(-90 1518 ${c1})"`);T(1518,c2,t2,'dimtxt',`${mid} transform="rotate(-90 1518 ${c2})"`)});
L(1583.500,408,1583.500,880,W);
[[543,'24000'],[778,'18000']].forEach(([y,t])=>T(1581,y,t,'dimtxt',`${mid} transform="rotate(-90 1581 ${y})"`));
/* sheet title */
T(787,1054,'柱网及柱间支撑布置图','cjk',mid+' fill="#f00" font-size="10" font-weight="500"');L(734,1060,840,1060,'#c8c8c8',3);
/* title block */
const Y='#c8c800';
L(1407,1097,1407,1122,'#8c8c00',2);L(1419.500,1097,1419.500,1181,Y);L(1470,1097,1470,1170,'#8c8c00',2);
[1106,1114.500,1122.500,1134.500,1146.500,1158.500,1169.500].forEach(y=>L(1394,y,1495,y,Y));L(1596,1139.500,right,1139.500,Y);L(1596,1149.500,right,1149.500,Y);
P('M1394.500 1181V1097.500H4000M1444.500 1097V1181M1495 1097V1181M1495 1118H4000M1495 1160H4000M1596 1118V1181','#e80000',1.500);
const q=(x,y,t,a='middle')=>T(x,y,t,'cjk',`text-anchor="${a}" fill="#fff" font-size="6" font-weight="700"`);
q(1401,1121,'标记');q(1413,1121,'数量');q(1432,1121,'更 改 者');q(1457,1121,'签 名 者');q(1482,1121,'日 期');
['设 计','制 图','校 核','审 核','审 定'].forEach((t,i)=>q(1406,1131+i*12,t));
['项目负责人','校图审查','总工程师','院 长'].forEach((t,i)=>q(1457,1131+i*12,t));q(1469,1178,'2003年10月绘制');q(1609,1147,'共','end');q(1609,1157,'第','end');
T(1543,1145,'维修三部厂房','cjk',mid+' fill="#0ff" font-size="8" font-weight="700"');T(1545,1174,'柱网及柱间支撑布置图','cjk',mid+' fill="#0ff" font-size="8" font-weight="700"');
/* UCS icon */
P('M61.500 1259V1309.500H112M57.500 1304.500h9v9h-9z','#e8e8e8');P('M63 1242l7 7 6-7M69.500 1249v7M116 1295l13 13M129 1295l-13 13','#e8e8e8');
/* view cube */
s+='<circle cx="1526" cy="215" r="53" fill="none" stroke="#555" stroke-opacity=".5" stroke-width="13"/><rect x="1500.500" y="189.500" width="51" height="51" fill="#fff" fill-opacity=".65" stroke="#888"/><rect x="1510" y="199" width="32" height="32" fill="#9296a0" fill-opacity=".4"/>';
const v=(x,y,t,c='#9a9a9a',z=18,w=500)=>T(x,y,t,'cjk',`text-anchor="middle" fill="${c}" font-size="${z}" font-weight="${w}"`);
v(1526,166,'北');v(1526,279,'南');v(1469,222,'西');v(1582,222,'东');v(1526,226,'上','#50545c',30,400);
s+='<rect x="1502.500" y="302.500" width="47" height="17" rx="4" fill="#7f808c" stroke="#9a9aa4"/><path d="M1536.500 309h8l-4 4z" fill="none" stroke="#b4b4be"/>';
T(1518,314,'WCS','cjk','text-anchor="middle" fill="#3c3c44" font-size="11" style="font-family:Liberation Sans"');
document.getElementById('sheet').innerHTML=`<g transform="translate(-33 -133)">${s}</g>`;
</script>
</body>
</html>
